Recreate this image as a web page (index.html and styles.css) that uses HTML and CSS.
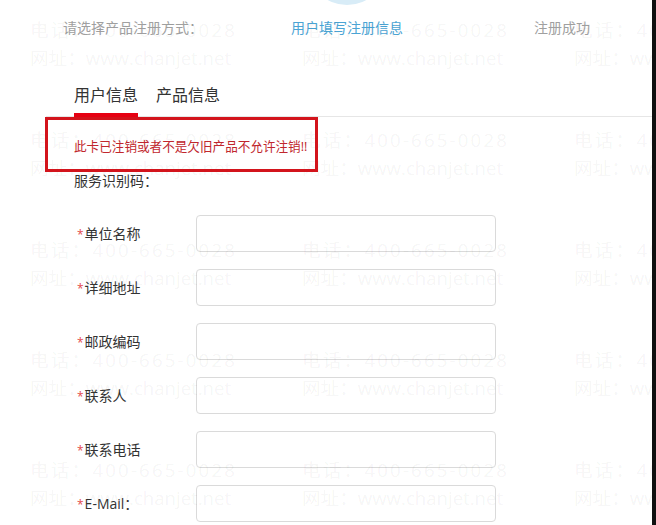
FILE: index.html
```html
<!DOCTYPE html>
<html lang="zh-CN">
<head>
    <meta charset="UTF-8">
    <meta name="viewport" content="width=device-width, initial-scale=1.0">
    <title>产品注册</title>
    <link rel="stylesheet" href="styles.css">
</head>
<body>
    <div class="page">
        <div class="steps">
            <div class="step step-first">请选择产品注册方式：</div>
            <div class="step step-active">用户填写注册信息</div>
            <div class="step">注册成功</div>
        </div>

        <div class="tabs">
            <div class="tab active">用户信息</div>
            <div class="tab">产品信息</div>
        </div>

        <div class="content">
            <div class="error">此卡已注销或者不是欠旧产品不允许注销!!</div>
            <div class="service">服务识别码：</div>

            <div class="form">
                <div class="row">
                    <label class="label"><span class="star">*</span>单位名称</label>
                    <input class="field" type="text">
                </div>
                <div class="row">
                    <label class="label"><span class="star">*</span>详细地址</label>
                    <input class="field" type="text">
                </div>
                <div class="row">
                    <label class="label"><span class="star">*</span>邮政编码</label>
                    <input class="field" type="text">
                </div>
                <div class="row">
                    <label class="label"><span class="star">*</span>联系人</label>
                    <input class="field" type="text">
                </div>
                <div class="row">
                    <label class="label"><span class="star">*</span>联系电话</label>
                    <input class="field" type="text">
                </div>
                <div class="row">
                    <label class="label"><span class="star">*</span>E-Mail：</label>
                    <input class="field" type="text">
                </div>
            </div>
        </div>

        <div class="mark-box"></div>

        <div class="watermark">
            <div class="wm"><span class="tel">电话：400-665-0028</span><span>网址：www.chanjet.net</span></div>
            <div class="wm"><span class="tel">电话：400-665-0028</span><span>网址：www.chanjet.net</span></div>
            <div class="wm"><span class="tel">电话：400-665-0028</span><span>网址：www.chanjet.net</span></div>
            <div class="wm"><span class="tel">电话：400-665-0028</span><span>网址：www.chanjet.net</span></div>
            <div class="wm"><span class="tel">电话：400-665-0028</span><span>网址：www.chanjet.net</span></div>
            <div class="wm"><span class="tel">电话：400-665-0028</span><span>网址：www.chanjet.net</span></div>
            <div class="wm"><span class="tel">电话：400-665-0028</span><span>网址：www.chanjet.net</span></div>
            <div class="wm"><span class="tel">电话：400-665-0028</span><span>网址：www.chanjet.net</span></div>
            <div class="wm"><span class="tel">电话：400-665-0028</span><span>网址：www.chanjet.net</span></div>
            <div class="wm"><span class="tel">电话：400-665-0028</span><span>网址：www.chanjet.net</span></div>
            <div class="wm"><span class="tel">电话：400-665-0028</span><span>网址：www.chanjet.net</span></div>
            <div class="wm"><span class="tel">电话：400-665-0028</span><span>网址：www.chanjet.net</span></div>
            <div class="wm"><span class="tel">电话：400-665-0028</span><span>网址：www.chanjet.net</span></div>
            <div class="wm"><span class="tel">电话：400-665-0028</span><span>网址：www.chanjet.net</span></div>
            <div class="wm"><span class="tel">电话：400-665-0028</span><span>网址：www.chanjet.net</span></div>
        </div>
    </div>
</body>
</html>
```

FILE: styles.css
```css
body{
    margin: 0;
    background-color: #101010;
    font-family: "Open Sans", "Noto Sans CJK SC", sans-serif;
}
.page{
    position: relative;
    width: 652px;
    height: 525px;
    overflow: hidden;
    background-color: #fff;
}

/* steps */
.steps{
    display: flex;
    height: 84px;
    box-sizing: border-box;
    padding: 19px 0 0 63px;
}
.step{
    font-size: 14px;
    line-height: 18px;
    color: #a0a0a0;
}
.step-first{
    width: 228px;
}
.step-active{
    position: relative;
    width: 243px;
    color: #4ba4d4;
}
.step-active::before{
    content: '';
    position: absolute;
    left: 16px;
    top: -94px;
    width: 80px;
    height: 80px;
    border-radius: 50%;
    background-color: #d8ecf7;
}

/* tabs */
.tabs{
    display: flex;
    margin-left: 46px;
    padding-left: 28px;
    border-bottom: 1px solid #e6e6e6;
}
.tab{
    font-size: 16px;
    line-height: 22px;
    color: #333;
    padding-bottom: 7px;
    margin-bottom: -1px;
    margin-right: 18px;
    border-bottom: 4px solid transparent;
}
.tab.active{
    border-bottom-color: #e60012;
}

/* content */
.content{
    padding-left: 74px;
}
.error{
    margin-top: 20px;
    font-size: 12.6px;
    line-height: 20px;
    color: #c1272d;
}
.service{
    margin-top: 14px;
    font-size: 14px;
    line-height: 20px;
    color: #333;
}
.form{
    display: flex;
    flex-direction: column;
    gap: 17px;
    margin-top: 24px;
}
.row{
    display: flex;
    align-items: center;
}
.label{
    width: 122px;
    box-sizing: border-box;
    padding: 2px 0 0 3px;
    font-size: 14px;
    line-height: 20px;
    color: #333;
}
.star{
    font-size: 12px;
    color: #e44b4b;
    margin-right: 1px;
}
.field{
    width: 300px;
    height: 37px;
    box-sizing: border-box;
    border: 1px solid #dadada;
    border-radius: 4px;
    background-color: #fff;
    margin: 0;
}

/* red frame drawn over the screenshot */
.mark-box{
    position: absolute;
    left: 45px;
    top: 117px;
    width: 273px;
    height: 55px;
    box-sizing: border-box;
    border: 3px solid #d3141c;
    z-index: 3;
}

/* watermark */
.watermark{
    position: absolute;
    left: 0;
    top: 0;
    right: 0;
    bottom: 0;
    display: grid;
    grid-template-columns: repeat(3, 272px);
    grid-auto-rows: 110px;
    padding: 16px 0 0 30px;
    pointer-events: none;
    z-index: 2;
}
.wm{
    display: flex;
    flex-direction: column;
    font-size: 18.6px;
    line-height: 28px;
    color: rgba(0, 0, 0, 0.055);
    white-space: nowrap;
}
.wm .tel{
    letter-spacing: 2.2px;
}
```
